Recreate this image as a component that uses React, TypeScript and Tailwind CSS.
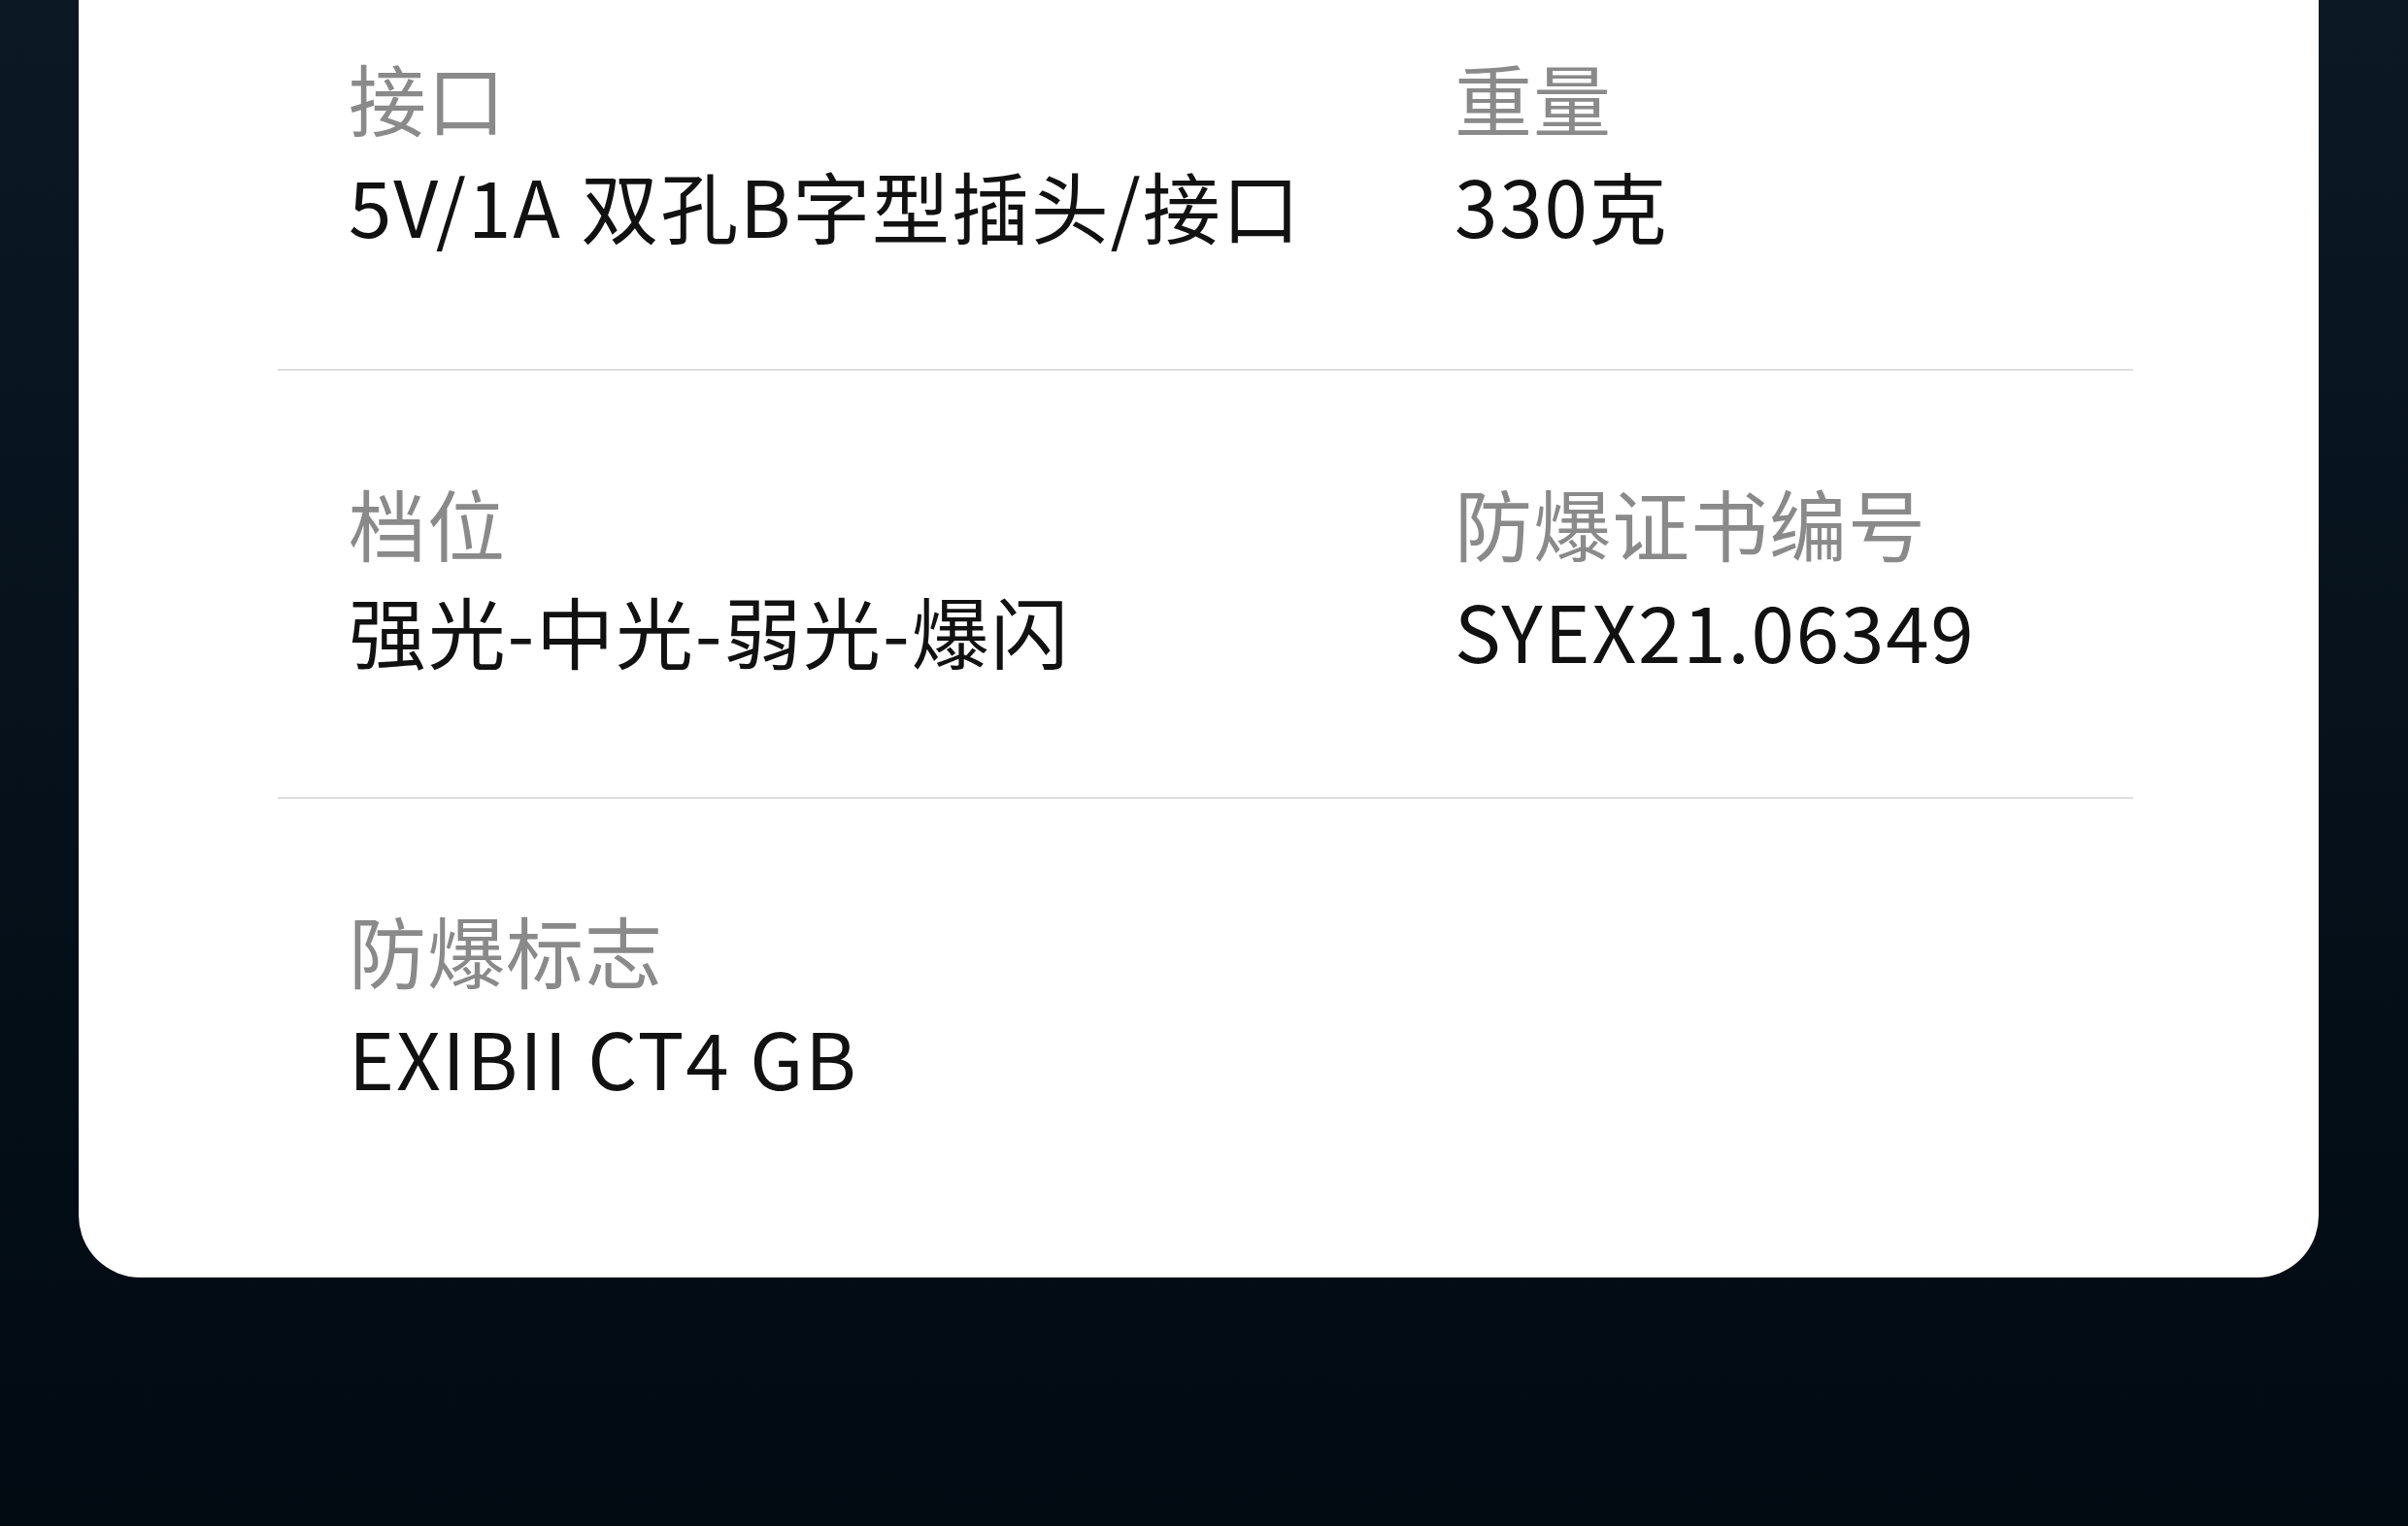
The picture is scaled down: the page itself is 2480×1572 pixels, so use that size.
import React from "react";

type Item = { label: string; value: string };

const rows: { items: Item[]; pad: string }[] = [
  {
    items: [
      { label: "接口", value: "5V/1A 双孔B字型插头/接口" },
      { label: "重量", value: "330克" },
    ],
    pad: "pt-[44px] pb-[114px]",
  },
  {
    items: [
      { label: "档位", value: "强光-中光-弱光-爆闪" },
      { label: "防爆证书编号", value: "SYEX21.06349" },
    ],
    pad: "pt-[100px] pb-[117px]",
  },
  {
    items: [{ label: "防爆标志", value: "EXIBII CT4 GB" }],
    pad: "pt-[99px] pb-[172px]",
  },
];

export default function App() {
  return (
    <div
      className="w-[2480px] h-[1572px] overflow-hidden bg-gradient-to-b from-[#0c1824] to-[#020a12] pl-[81px] pr-[92px]"
      style={{ fontFamily: '"Noto Sans CJK SC", "Noto Sans", sans-serif' }}
    >
      <div className="bg-white rounded-b-[64px] pl-[205px] pr-[191px]">
        {rows.map((row, i) => (
          <div key={i}>
            {i > 0 && <div className="h-[2px] bg-[#dedede]" />}
            <div className={`grid grid-cols-[1139px_1fr] pl-[73px] ${row.pad}`}>
              {row.items.map((it) => (
                <div key={it.label} className="flex flex-col">
                  <div className="text-[80px] leading-[111px] tracking-[1px] text-[#8a8a8a] whitespace-nowrap">
                    {it.label}
                  </div>
                  <div className="text-[80px] leading-[111px] tracking-[1.8px] text-[#111111] whitespace-nowrap">
                    {it.value}
                  </div>
                </div>
              ))}
            </div>
          </div>
        ))}
      </div>
    </div>
  );
}
